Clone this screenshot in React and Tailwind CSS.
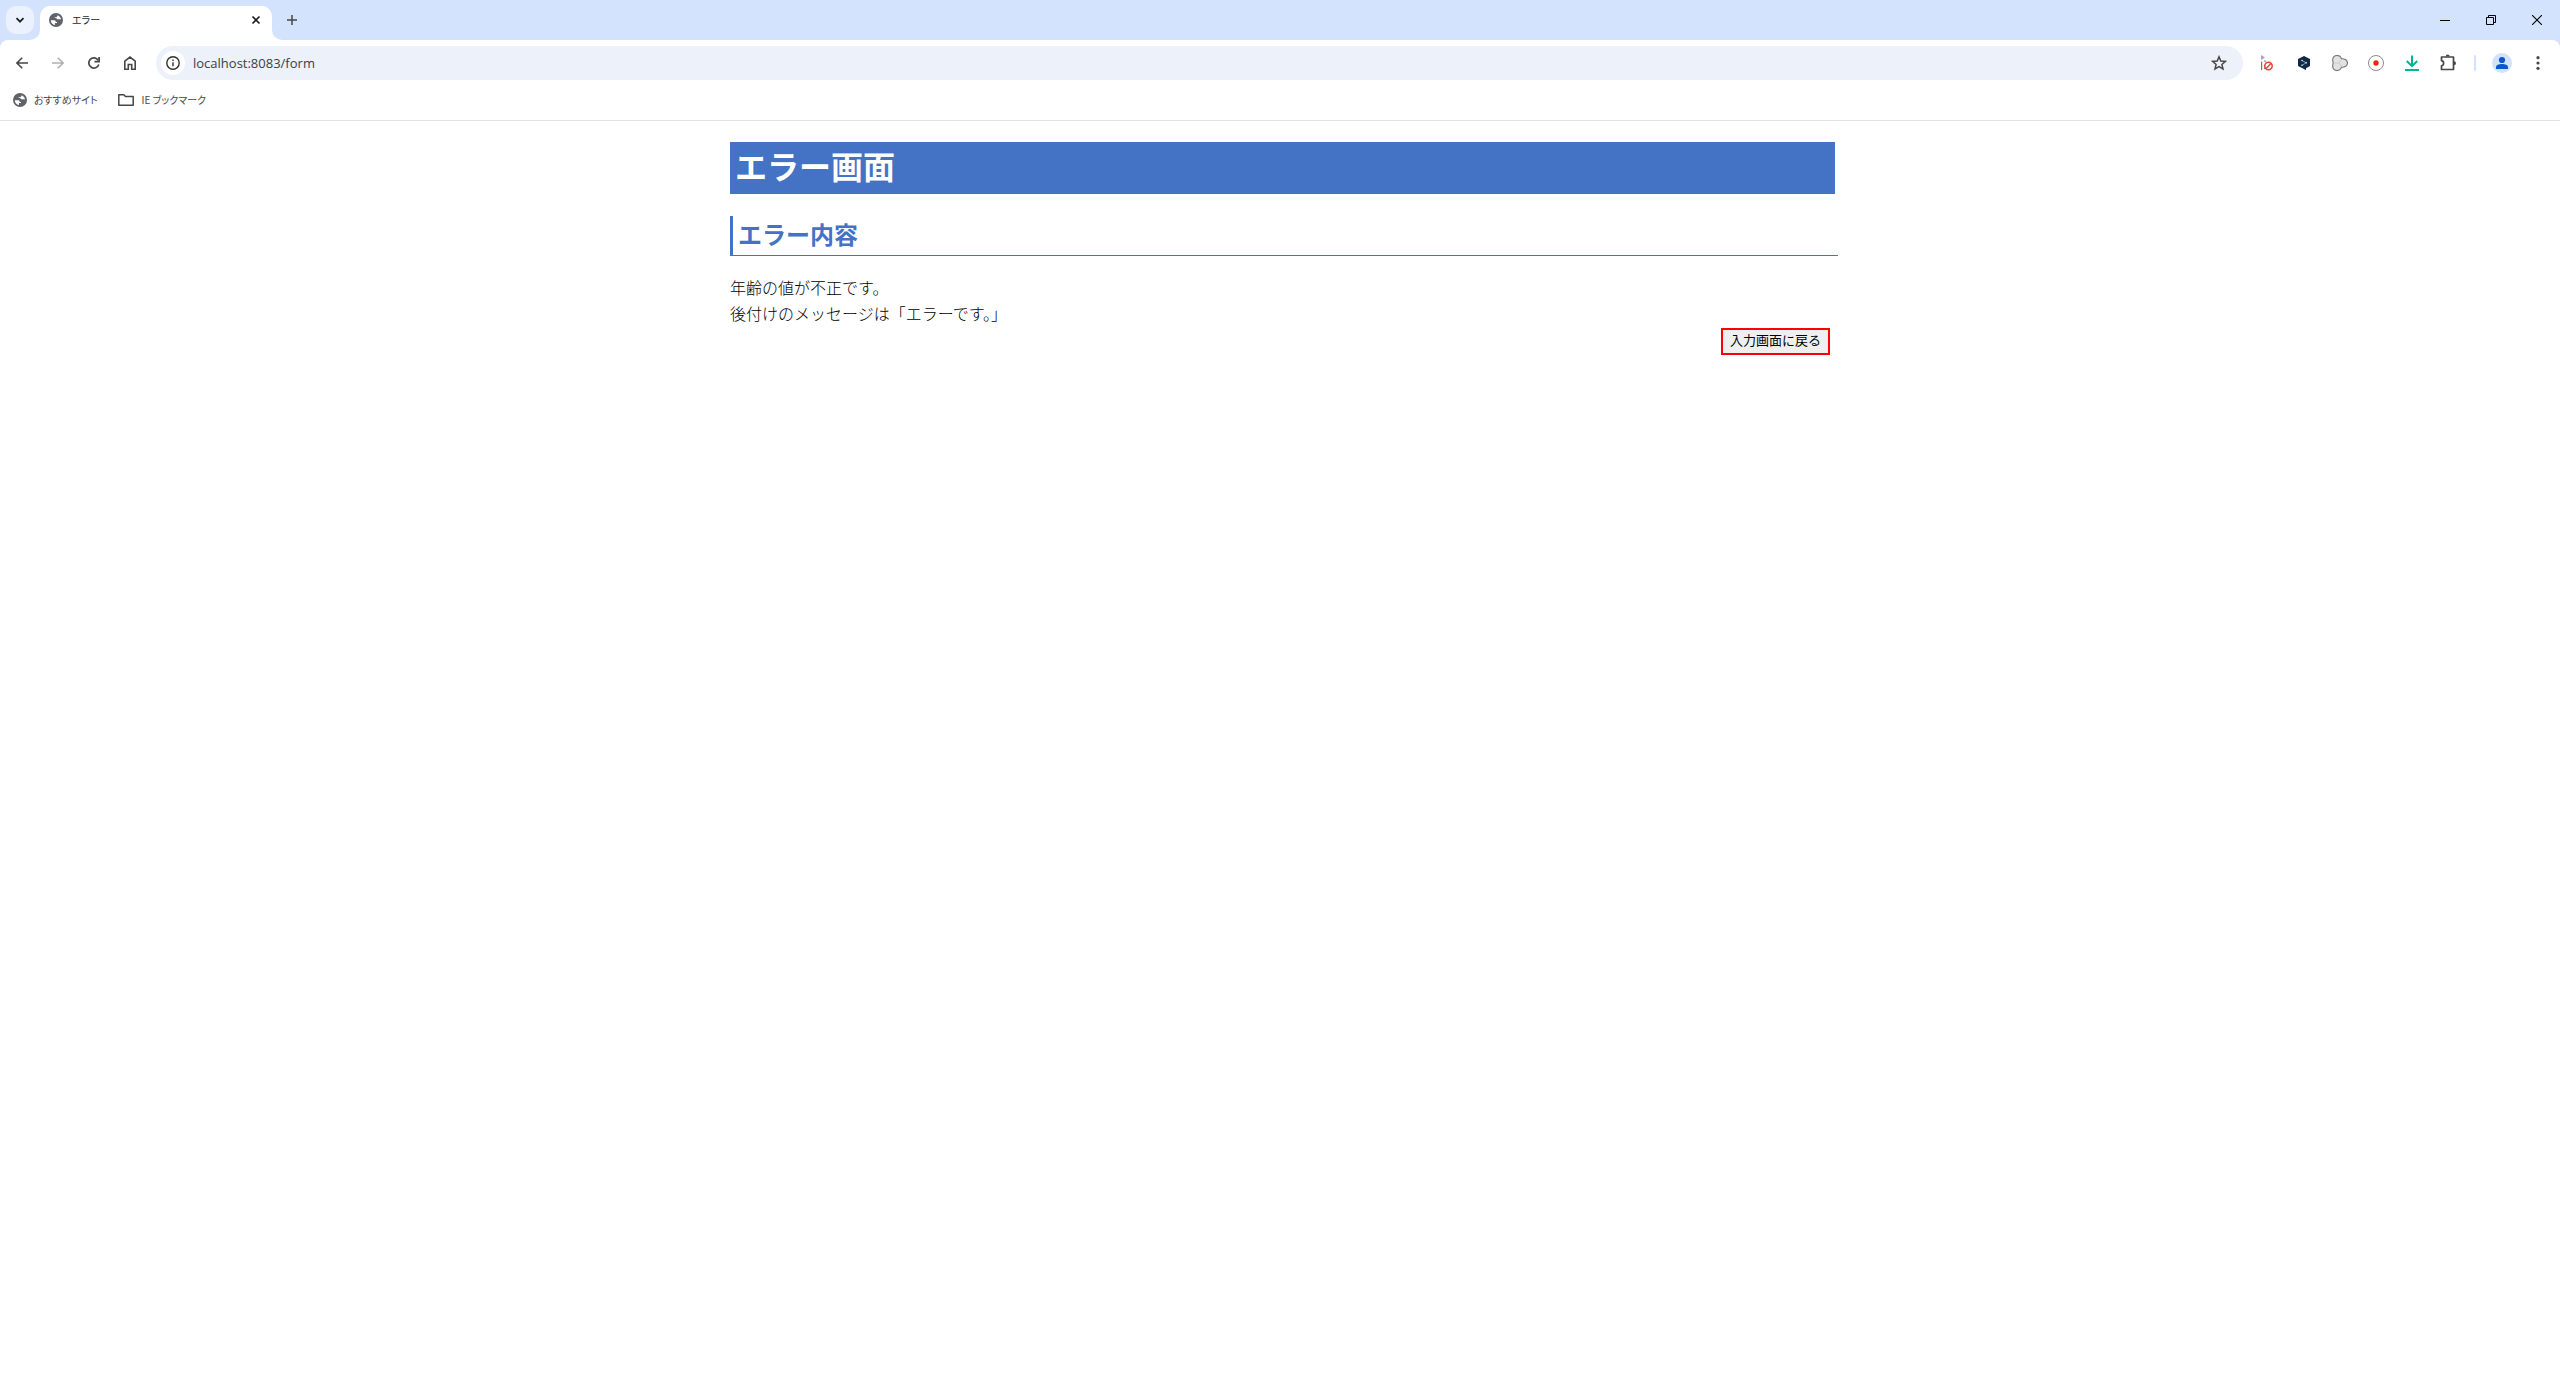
const TOOL_BUTTON = "flex h-[34px] w-[34px] shrink-0 items-center justify-center rounded-full text-[#474747]";

const GlobeIcon = () => (
  <svg viewBox="0 0 14 14" className="h-[14px] w-[14px] shrink-0" aria-hidden="true">
    <circle cx="7" cy="7" r="7" fill="#5f6368" />
    <path d="M1.800 7.200h3.400c1 0 1.500.6 1.500 1.700h1.300v1.100H6v2C3.600 11.900 1.800 9.800 1.800 7.200Z" fill="#fff" />
    <path
      d="M8.600 2.200c1.900.6 3.300 2.300 3.500 4.400-.4-.2-.8-.3-1.300-.3H9c-1 0-1.600-.5-1.600-1.500H5.700V4.100h1.200c1 0 1.600-.8 1.700-1.900Z"
      fill="#fff"
    />
  </svg>
);

const ExtensionIcons = {
  blocked: (
    <svg viewBox="0 0 16 16" className="h-4 w-4" fill="none">
      <path d="M1 0v5l4-2.500Z" fill="#b79ac8" />
      <path d="M1.600 6.500V15" stroke="#777" strokeWidth="1.200" />
      <path d="m4.500 5.500 2.500 2.500M4.500 10v5" stroke="#777" strokeWidth="1.200" strokeDasharray="1.500 1" />
      <circle cx="8.500" cy="11" r="3.700" fill="#fff" stroke="#ee4036" strokeWidth="1.500" />
      <path d="m6 13.500 5-5" stroke="#ee4036" strokeWidth="1.500" />
    </svg>
  ),
  translate: (
    <svg viewBox="0 0 16 16" className="h-4 w-4" fill="none">
      <path d="M8 1 14 4v7l-4 2.300v2L8 14l-6-3V4Z" fill="#0f2b46" />
      <path d="m6 5.500 4.200 2.300L6 10.300" stroke="#fff" strokeWidth=".5" />
      <circle cx="6" cy="5.500" r=".7" fill="#fff" />
      <circle cx="10.200" cy="7.800" r=".7" fill="#fff" />
      <circle cx="6" cy="10.300" r=".7" fill="#fff" />
    </svg>
  ),
  trefoil: (
    <svg viewBox="0 0 16 16" className="h-4 w-4" fill="none">
      <path
        d="M1.200 8C-.2 3.500 1.500.5 4.800.5c2.400 0 4.100 1.400 4.700 3.300 3.400-.3 6 1.600 6 4.200s-2.600 4.500-6 4.200c-.6 1.900-2.300 3.300-4.700 3.300-3.300 0-5-3-3.600-7.500Z"
        fill="#e2e2e2"
        stroke="#777"
        strokeWidth="1.100"
      />
      <path d="M2 8h5l2-3M7 8l2 3" stroke="#cecece" />
    </svg>
  ),
  record: (
    <svg viewBox="0 0 16 16" className="h-4 w-4" fill="none">
      <circle cx="8" cy="8" r="7.500" fill="#fff" stroke="#8b8b8b" />
      <circle cx="8" cy="8" r="2.700" fill="#f0280f" />
    </svg>
  ),
  download: (
    <svg viewBox="0 0 16 16" className="h-4 w-4" fill="none" stroke="#00b398" strokeWidth="2">
      <path d="M8 .5V11M2.700 6 8 11.200 13.300 6M1 15h14" />
    </svg>
  ),
  puzzle: (
    <svg viewBox="0 0 18 18" className="h-[18px] w-[18px]" fill="none">
      <path
        d="M2.500 3h12v12.500h-12v-3.700a2.600 2.600 0 0 0 0-5.100Z"
        stroke="#474747"
        strokeWidth="1.700"
        strokeLinejoin="round"
      />
      <path d="M6.700 2.500a2 2 0 0 1 4 0ZM15 7.200a2 2 0 0 1 0 4Z" fill="#474747" />
    </svg>
  ),
};

const EXTENSIONS = [
  { id: "blocked", label: "Blocked cursor" },
  { id: "translate", label: "Translate" },
  { id: "trefoil", label: "Viewer" },
  { id: "record", label: "Record" },
  { id: "download", label: "Download" },
  { id: "puzzle", label: "Extensions" },
];

const TabStrip = () => (
  <div className="flex h-10 items-end bg-[#d3e3fd]">
    <button
      aria-label="Search tabs"
      className="mx-[6px] mb-[6px] flex h-7 w-7 items-center justify-center rounded-[10px] bg-[#ebf1fd]"
    >
      <svg viewBox="0 0 10 10" className="h-[10px] w-[10px]" fill="none" stroke="#1f1f1f" strokeWidth="1.800">
        <path d="m1.500 3.200 3.500 3.500 3.500-3.500" />
      </svg>
    </button>
    <div className="relative flex h-[34px] w-[232px] items-center rounded-t-[10px] bg-white pr-2 pb-[6px] pl-[9px]">
      <svg viewBox="0 0 10 10" className="absolute bottom-0 -left-[10px] h-[10px] w-[10px]" fill="#fff">
        <path d="M10 0v10H0A10 10 0 0 0 10 0Z" />
      </svg>
      <GlobeIcon />
      <span className="ml-[9px] flex-1 text-[10px] leading-4 text-[#1f1f1f] [font-feature-settings:'palt']">エラー</span>
      <button aria-label="Close tab" className="flex h-4 w-4 items-center justify-center">
        <svg viewBox="0 0 10 10" className="h-[10px] w-[10px]" stroke="#1f1f1f" strokeWidth="1.600">
          <path d="m1.500 1.500 7 7M8.500 1.500l-7 7" />
        </svg>
      </button>
      <svg viewBox="0 0 10 10" className="absolute -right-[10px] bottom-0 h-[10px] w-[10px]" fill="#fff">
        <path d="M0 0v10h10A10 10 0 0 1 0 0Z" />
      </svg>
    </div>
    <button aria-label="New tab" className="mb-[6px] ml-[6px] flex h-7 w-7 items-center justify-center">
      <svg viewBox="0 0 10 10" className="h-[10px] w-[10px]" stroke="#474747" strokeWidth="1.500">
        <path d="M5 0v10M0 5h10" />
      </svg>
    </button>
    <div className="ml-auto flex h-10">
      <button aria-label="Minimize" className="flex w-[46px] items-center justify-center">
        <svg viewBox="0 0 10 10" className="h-[10px] w-[10px]" stroke="#000">
          <path d="M0 5.500h10" />
        </svg>
      </button>
      <button aria-label="Restore" className="flex w-[46px] items-center justify-center">
        <svg viewBox="0 0 10 10" className="h-[10px] w-[10px]" fill="none" stroke="#000">
          <path d="M.5 2.500h7v7h-7ZM2.500 2.500v-2h7v7h-2" />
        </svg>
      </button>
      <button aria-label="Close" className="flex w-[46px] items-center justify-center">
        <svg viewBox="0 0 10 10" className="h-[10px] w-[10px]" stroke="#000" strokeWidth="1.100">
          <path d="m0 0 10 10M10 0 0 10" />
        </svg>
      </button>
    </div>
  </div>
);

const Toolbar = () => (
  <div className="bg-[#d3e3fd]">
    <div className="flex items-center rounded-t-lg bg-white px-[5px] py-[6px]">
      <div className="flex gap-[2px]">
        <button aria-label="Back" className={TOOL_BUTTON}>
          <svg viewBox="0 0 12 12" className="h-3 w-3" fill="none" stroke="currentColor" strokeWidth="1.600">
            <path d="M12 6H1M6.200.7.9 6l5.300 5.300" />
          </svg>
        </button>
        <button aria-label="Forward" className={TOOL_BUTTON} disabled>
          <svg viewBox="0 0 12 12" className="h-3 w-3" fill="none" stroke="#b0b0b0" strokeWidth="1.600">
            <path d="M0 6h11M5.800.7 11.100 6l-5.300 5.300" />
          </svg>
        </button>
        <button aria-label="Reload" className={TOOL_BUTTON}>
          <svg viewBox="0 0 12 12" className="h-3 w-3" fill="none" stroke="currentColor" strokeWidth="1.700">
            <path d="M10.800 7.500A5.100 5.100 0 1 1 10.300 3.300" />
            <path d="M11.100 0v4.700H6.500" />
          </svg>
        </button>
        <button aria-label="Home" className={TOOL_BUTTON}>
          <svg viewBox="0 0 12 14" className="h-[14px] w-3" fill="none" stroke="currentColor" strokeWidth="1.600">
            <path d="M.8 5.200 6 1.100l5.200 4.100v8H7.700V8.500H4.300v4.700H.8Z" />
          </svg>
        </button>
      </div>

      <div className="mr-2 ml-[9px] flex h-[34px] flex-1 items-center rounded-full bg-[#edf1fa] pr-[7px] pl-[5px]">
        <button aria-label="Site information" className="flex h-6 w-6 items-center justify-center rounded-full bg-white">
          <svg viewBox="0 0 14 14" className="h-[14px] w-[14px]" fill="none" stroke="#303030" strokeWidth="1.400">
            <circle cx="7" cy="7" r="6.200" />
            <path d="M7 6.200v4M7 3.600v1.500" />
          </svg>
        </button>
        <input
          type="text"
          aria-label="Address"
          defaultValue="localhost:8083/form"
          className="ml-2 min-w-0 flex-1 bg-transparent font-['Open_Sans',sans-serif] text-[13px] leading-5 text-[#3c4043] outline-none"
        />
        <button aria-label="Bookmark this page" className="flex h-[34px] w-[34px] items-center justify-center">
          <svg viewBox="0 0 16 16" className="h-4 w-4" fill="none" stroke="#474747" strokeWidth="1.500">
            <path d="m8 1.800 1.800 4.200 4.600.4-3.500 3 1.100 4.500L8 11.500l-4 2.400 1.100-4.500-3.500-3L6.200 6Z" />
          </svg>
        </button>
      </div>

      <div className="flex gap-[2px]">
        {EXTENSIONS.map(({ id, label }) => (
          <button key={id} aria-label={label} className={TOOL_BUTTON}>
            {ExtensionIcons[id]}
          </button>
        ))}
      </div>
      <div className="mx-[9px] h-4 w-[2px] rounded-full bg-[#d3e3fd]" />
      <div className="flex gap-[2px]">
        <button aria-label="Profile" className={TOOL_BUTTON}>
          <svg viewBox="0 0 20 20" className="h-5 w-5">
            <circle cx="10" cy="10" r="10" fill="#d3e3fd" />
            <circle cx="10" cy="7" r="3.100" fill="#0b57d0" />
            <path d="M4 16v-1.700c0-2.200 2.700-3.300 6-3.300s6 1.100 6 3.300V16Z" fill="#0b57d0" />
          </svg>
        </button>
        <button aria-label="Menu" className={TOOL_BUTTON}>
          <svg viewBox="0 0 4 14" className="h-[14px] w-1" fill="currentColor">
            <circle cx="2" cy="1.700" r="1.600" />
            <circle cx="2" cy="7" r="1.600" />
            <circle cx="2" cy="12.300" r="1.600" />
          </svg>
        </button>
      </div>
    </div>
  </div>
);

const BookmarksBar = () => (
  <nav className="flex gap-5 border-b border-[#dfe1e5] px-[13px] pb-[6px] text-[10px] leading-7 text-[#474747] [font-feature-settings:'palt']">
    <a href="#recommended" className="flex items-center gap-[7px]">
      <GlobeIcon />
      おすすめサイト
    </a>
    <a href="#ie" className="flex items-center gap-2">
      <svg viewBox="0 0 16 12" className="h-3 w-4" fill="none" stroke="#474747" strokeWidth="1.500">
        <path d="M.8.8h5.100l1.500 1.600h7.800v8.800H.8Z" strokeLinejoin="round" />
      </svg>
      IE ブックマーク
    </a>
  </nav>
);

export default function App() {
  return (
    <div className="min-h-screen bg-white font-['Noto_Sans_CJK_JP',sans-serif]">
      <header>
        <TabStrip />
        <Toolbar />
        <BookmarksBar />
      </header>

      <main className="mx-auto mt-[21px] w-full max-w-[1100px] text-black">
        <h1 className="box-content w-full bg-[#4472c4] pb-[6px] pl-[5px] text-[32px] leading-[46px] font-bold text-white">
          エラー画面
        </h1>
        <h2 className="mt-[22px] box-content w-full border-b border-l-[3px] border-[#4472c4] pb-[3px] pl-[5px] text-2xl leading-9 font-bold text-[#4472c4]">
          エラー内容
        </h2>
        <p className="mt-[18px] mb-[2px] text-base leading-[26px] font-light">
          年齢の値が不正です。
          <br />
          後付けのメッセージは「エラーです。」
        </p>
        <div className="flex justify-end">
          <button
            type="button"
            className="border-2 border-[#ff0000] bg-[#efefef] px-[7px] pb-[3px] text-[13px] leading-5"
          >
            入力画面に戻る
          </button>
        </div>
      </main>
    </div>
  );
}
